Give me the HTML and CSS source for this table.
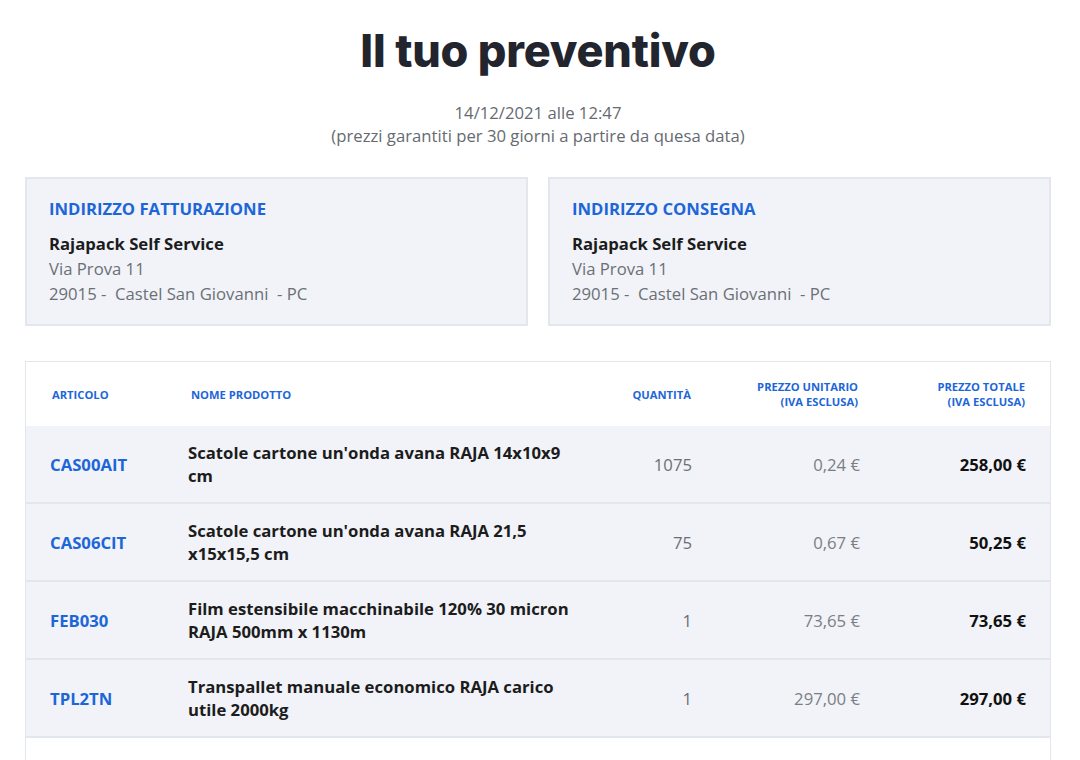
FILE: index.html
```html
<!DOCTYPE html>
<html lang="it">
<head>
<meta charset="utf-8">
<title>Il tuo preventivo</title>
<link rel="stylesheet" href="styles.css">
</head>
<body>
<main class="page">
  <h1 class="title">Il tuo preventivo</h1>
  <div class="date">
    <p>14/12/2021 alle 12:47</p>
    <p>(prezzi garantiti per 30 giorni a partire da quesa data)</p>
  </div>

  <section class="addresses">
    <div class="addr">
      <h2 class="addr-title">INDIRIZZO FATTURAZIONE</h2>
      <p class="addr-name">Rajapack Self Service</p>
      <p class="addr-line">Via Prova 11</p>
      <p class="addr-line">29015 -&nbsp; Castel San Giovanni &nbsp;- PC</p>
    </div>
    <div class="addr">
      <h2 class="addr-title">INDIRIZZO CONSEGNA</h2>
      <p class="addr-name">Rajapack Self Service</p>
      <p class="addr-line">Via Prova 11</p>
      <p class="addr-line">29015 -&nbsp; Castel San Giovanni &nbsp;- PC</p>
    </div>
  </section>

  <section class="items">
    <table class="tbl">
      <colgroup>
        <col class="c1"><col class="c2"><col class="c3"><col class="c4"><col class="c5">
      </colgroup>
      <thead>
        <tr>
          <th class="left">ARTICOLO</th>
          <th class="left">NOME PRODOTTO</th>
          <th class="right">QUANTITÀ</th>
          <th class="right">PREZZO UNITARIO<br>(IVA ESCLUSA)</th>
          <th class="right">PREZZO TOTALE<br>(IVA ESCLUSA)</th>
        </tr>
      </thead>
      <tbody>
        <tr>
          <td class="code">CAS00AIT</td>
          <td class="name">Scatole cartone un'onda avana RAJA 14x10x9 cm</td>
          <td class="qty">1075</td>
          <td class="unit">0,24 €</td>
          <td class="total">258,00 €</td>
        </tr>
        <tr>
          <td class="code">CAS06CIT</td>
          <td class="name">Scatole cartone un'onda avana RAJA 21,5 x15x15,5 cm</td>
          <td class="qty">75</td>
          <td class="unit">0,67 €</td>
          <td class="total">50,25 €</td>
        </tr>
        <tr>
          <td class="code">FEB030</td>
          <td class="name">Film estensibile macchinabile 120% 30 micron RAJA 500mm x 1130m</td>
          <td class="qty">1</td>
          <td class="unit">73,65 €</td>
          <td class="total">73,65 €</td>
        </tr>
        <tr>
          <td class="code">TPL2TN</td>
          <td class="name">Transpallet manuale economico RAJA carico utile 2000kg</td>
          <td class="qty">1</td>
          <td class="unit">297,00 €</td>
          <td class="total">297,00 €</td>
        </tr>
      </tbody>
    </table>
    <div class="items-foot"></div>
  </section>
</main>
</body>
</html>
```
FILE: styles.css
```css
html, body {
  margin: 0;
  padding: 0;
  background: #ffffff;
}
body {
  font-family: "Open Sans", "Noto Sans", sans-serif;
  color: #222;
}
.page {
  width: 1026px;
  margin: 0 0 0 25px;
  padding-top: 24px;
}
.title {
  margin: 0;
  text-align: center;
  font-family: "Inter", "Lato", sans-serif;
  font-weight: 800;
  font-size: 45px;
  line-height: 54px;
  color: #23252e;
  letter-spacing: -0.2px;
}
.date {
  margin-top: 23px;
  text-align: center;
  color: #666a70;
  font-size: 16.7px;
  line-height: 23px;
}
.date p { margin: 0; }

.addresses {
  display: grid;
  grid-template-columns: 1fr 1fr;
  gap: 20px;
  margin-top: 30px;
}
.addr {
  background: #f1f3f8;
  border: 2px solid #e2e6ed;
  padding: 17px 22px 18px;
  min-height: 110px;
}
.addr p, .addr h2 { margin: 0; }
.addr-title {
  font-size: 16.7px;
  font-weight: 700;
  color: #1d66d8;
  line-height: 25px;
  margin-bottom: 10px !important;
}
.addr-name {
  font-size: 16.7px;
  font-weight: 700;
  color: #1c1c1c;
  line-height: 25px;
}
.addr-line {
  font-size: 16.7px;
  color: #6b6f75;
  line-height: 25px;
}

.items {
  margin-top: 35px;
  border: 1px solid #e2e6ed;
}
.tbl {
  width: 100%;
  border-collapse: collapse;
  table-layout: fixed;
}
.c1 { width: 162px; }
.c2 { width: 410px; }
.c3 { width: 119px; }
.c4 { width: 168px; }
.c5 { width: 165px; }
.tbl th {
  height: 64px;
  font-size: 11.2px;
  font-weight: 700;
  color: #1d66d8;
  line-height: 15px;
  padding: 0;
  vertical-align: middle;
}
.tbl th.left { text-align: left; }
.tbl th:first-child { padding-left: 26px; }
.tbl th:nth-child(2) { padding-left: 3px; }
.tbl th.right { text-align: right; padding-right: 25px; }
.tbl th:nth-child(3) { padding-right: 26px; }
.tbl th:nth-child(4) { padding-right: 27px; }
.tbl tbody tr {
  background: #f1f3f8;
  border-bottom: 2px solid #e2e6ed;
}
.tbl td {
  height: 76px;
  padding: 0;
  vertical-align: middle;
  font-size: 16.7px;
  line-height: 23px;
}
.tbl td.code {
  padding-left: 24px;
  color: #1d66d8;
  font-weight: 700;
}
.tbl td.name {
  font-weight: 700;
  color: #1c1c1c;
  padding-right: 24px;
}
.tbl td.qty {
  text-align: right;
  color: #6b6f75;
  padding-right: 25px;
}
.tbl td.unit {
  text-align: right;
  color: #7a7e84;
  padding-right: 25px;
}
.tbl td.total {
  text-align: right;
  font-weight: 700;
  color: #111;
  padding-right: 24px;
}
.items-foot {
  height: 40px;
}
```
